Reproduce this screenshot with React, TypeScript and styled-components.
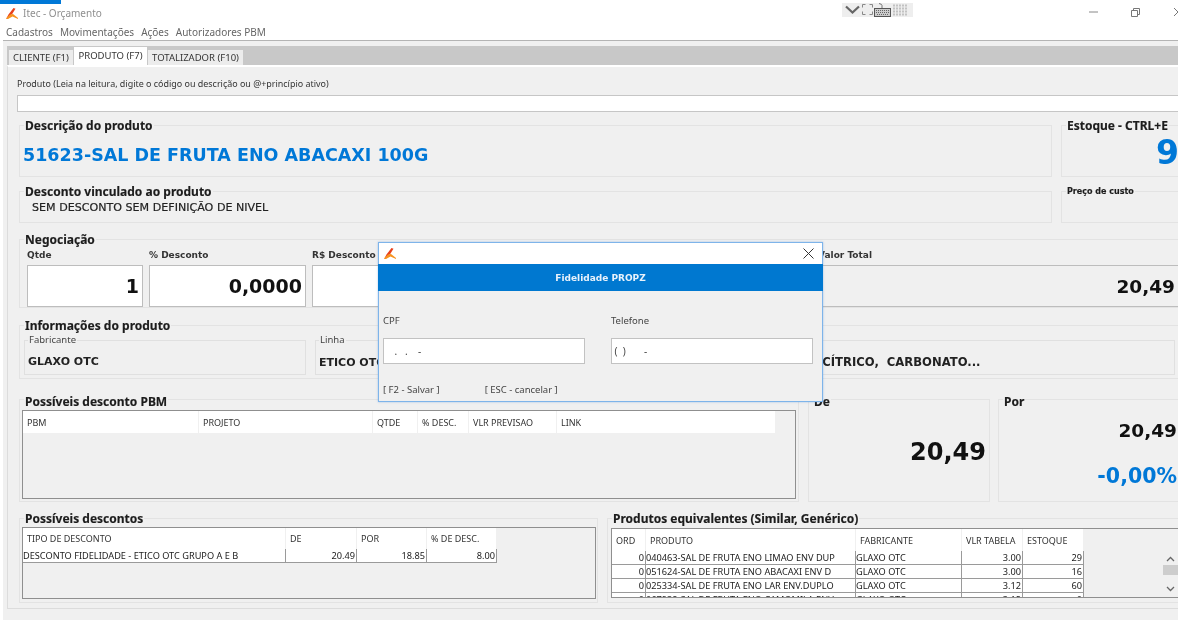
import React from "react";
import styled, { createGlobalStyle } from "styled-components";

const Global = createGlobalStyle`
  html, body { margin: 0; padding: 0; background: #fff; }
  * { box-sizing: border-box; }
`;

const FONT = `"DejaVu Sans", "Noto Sans", sans-serif`;
const TITLE_FONT = `"Noto Sans", "DejaVu Sans", sans-serif`;

const Page = styled.div`
  position: relative;
  width: 1178px;
  height: 626px;
  overflow: hidden;
  background: #fff;
  font-family: "Noto Sans", "DejaVu Sans", sans-serif;
  color: #2b2b2b;
  filter: blur(0.35px);
`;

const AccentStrip = styled.div`
  width: 61px;
  height: 4px;
  background: #0078d7;
`;

const TitleBar = styled.div`
  height: 19px;
  display: flex;
  align-items: center;
  padding-left: 6px;
  font-size: 10px;
  color: #8f8f8f;
  gap: 5px;
  & > span { margin-top: -2px; }
`;

const TrayGroup = styled.div`
  margin-left: 735px;
  height: 14px;
  width: 71px;
  background: #eeeeee;
  display: flex;
  align-items: center;
  gap: 1px;
  margin-top: -8px;
  padding-left: 2px;
`;

const WinButtons = styled.div`
  margin-left: auto;
  display: flex;
  align-items: center;
  gap: 33px;
  margin-top: -3px;
  margin-right: -5px;
`;

const MenuBar = styled.div`
  height: 17px;
  display: flex;
  align-items: center;
  gap: 7px;
  padding-left: 6px;
  font-size: 10px;
  color: #666;
`;

const Body = styled.div`
  height: 580px;
  margin-left: 3px;
  border-top: 1px solid #b4b4b4;
  background: #f0f0f0;
  padding: 5px 0 0 4px;
`;

const TabStrip = styled.div`
  height: 19px;
  background: #c8c8c8;
  display: flex;
  align-items: flex-end;
  padding-left: 2px;
`;

const Tab = styled.div<{ $active?: boolean; $w: number }>`
  width: ${(p) => p.$w}px;
  height: ${(p) => (p.$active ? 20 : 15)}px;
  margin-bottom: ${(p) => (p.$active ? -2 : 0)}px;
  background: ${(p) => (p.$active ? "#ffffff" : "#ececec")};
  font-size: 9.5px;
  color: #333;
  display: flex;
  align-items: center;
  justify-content: center;
  padding-bottom: ${(p) => (p.$active ? 4 : 0)}px;
  margin-right: 1px;
`;

const Content = styled.div`
  height: 544px;
  border-top: 2px solid #ffffff;
  border-left: 1px solid #dcdcdc;
  border-bottom: 1px solid #dcdcdc;
  padding: 11px 0 0 9px;
  background: #f0f0f0;
  width: 1200px;
`;

const SmallLabel = styled.div`
  font-size: 8.95px;
  height: 12px;
  line-height: 12px;
  color: #333;
`;

const ProductInput = styled.div`
  margin-top: 5px;
  height: 17px;
  background: #fff;
  border: 1px solid #c6c6c6;
`;

const Row = styled.div<{ $top: number; $h: number }>`
  display: flex;
  margin-top: ${(p) => p.$top}px;
  margin-left: 2px;
  height: ${(p) => p.$h}px;
`;

const Group = styled.fieldset<{ $w: number; $left?: number }>`
  margin: 0;
  margin-left: ${(p) => p.$left ?? 0}px;
  padding: 0;
  width: ${(p) => p.$w}px;
  flex: none;
  height: 100%;
  min-width: 0;
  border: 1px solid #e3e3e3;
`;

const Legend = styled.legend<{ $small?: boolean; $left?: number; $lh?: number }>`
  margin-left: ${(p) => p.$left ?? 4}px;
  padding: 0 1px;
  height: 14px;
  line-height: ${(p) => p.$lh ?? 16}px;
  font-family: ${(p) => (p.$small ? FONT : TITLE_FONT)};
  font-weight: 700;
  font-size: ${(p) => (p.$small ? 8 : 12)}px;
  color: #1c1c1c;
  -webkit-text-stroke: 0.15px #1c1c1c;
`;

const SubLegend = styled.legend`
  margin-left: 3px;
  padding: 0 1px;
  height: 12px;
  line-height: 12px;
  font-size: 9.5px;
  color: #444;
`;

const BigBlue = styled.div`
  font-family: ${FONT};
  font-weight: 700;
  font-size: 17.5px;
  color: #0078d7;
  padding: 13px 0 0 3px;
  white-space: nowrap;
`;

const StockValue = styled.div`
  width: 117px;
  font-family: ${FONT};
  font-weight: 700;
  font-size: 33px;
  line-height: 34px;
  color: #0078d7;
  text-align: right;
  margin-top: 4px;
`;

const DiscountText = styled.div`
  font-family: ${FONT};
  font-size: 11.1px;
  color: #222;
  padding: 3px 0 0 12px;
  white-space: nowrap;
  -webkit-text-stroke: 0.2px #222;
`;

const FieldRow = styled.div`
  display: flex;
  gap: 6px;
  padding-left: 7px;
  margin-top: 2px;
`;

const Field = styled.div<{ $w: number; $left?: number }>`
  width: ${(p) => p.$w}px;
  flex: none;
  margin-left: ${(p) => p.$left ?? 0}px;
`;

const FieldLabel = styled.div`
  font-family: ${FONT};
  font-weight: 700;
  font-size: 9px;
  height: 17px;
  line-height: 14px;
  color: #333;
  white-space: nowrap;
`;

const ValueBox = styled.div<{ $plain?: boolean }>`
  height: 42px;
  background: ${(p) => (p.$plain ? "#f0f0f0" : "#ffffff")};
  border: 1px solid #bdbdbd;
  font-family: ${FONT};
  font-weight: 700;
  font-size: ${(p) => (p.$plain ? 18.5 : 19)}px;
  color: #111;
  display: flex;
  align-items: center;
  justify-content: flex-end;
  padding-right: 3px;
`;

const SubGroup = styled.fieldset<{ $w: number; $left?: number }>`
  margin: 0 0 0 ${(p) => p.$left ?? 0}px;
  padding: 0 0 0 3px;
  width: ${(p) => p.$w}px;
  flex: none;
  min-width: 0;
  height: 41px;
  border: 1px solid #e0e0e0;

  & > legend { margin-left: 0; }
`;

const SubRow = styled.div`
  display: flex;
  padding-left: 4px;
  margin-top: 2px;
`;

const InfoValue = styled.div`
  font-family: ${FONT};
  font-weight: 700;
  font-size: 11px;
  color: #222;
  margin-top: 9px;
  white-space: nowrap;
`;

const InfoTail = styled.span`
  font-size: 11.6px;
  margin-left: 438px;
`;

const TableFrame = styled.div<{ $h: number; $ml?: number; $w: number; $mt?: number }>`
  width: ${(p) => p.$w}px;
  height: ${(p) => p.$h}px;
  margin-left: ${(p) => p.$ml ?? 2}px;
  margin-top: ${(p) => p.$mt ?? 2}px;
  border: 1px solid #8f8f8f;
  overflow: hidden;
  position: relative;
`;

const HeadRow = styled.div<{ $h: number }>`
  display: flex;
  height: ${(p) => p.$h}px;
`;

const HeadCell = styled.div<{ $w: number }>`
  width: ${(p) => p.$w}px;
  flex: none;
  background: #fff;
  margin-right: 1px;
  font-size: 9px;
  color: #333;
  padding-left: 4px;
  display: flex;
  align-items: center;
  white-space: nowrap;
`;

const DataRow = styled.div<{ $w: number }>`
  display: flex;
  width: ${(p) => p.$w}px;
  height: 14px;
  border-bottom: 1px solid #9a9a9a;
`;

const DataCell = styled.div<{ $w: number; $right?: boolean }>`
  width: ${(p) => p.$w}px;
  flex: none;
  background: #fff;
  border-right: 1px solid #9a9a9a;
  font-size: 9.2px;
  line-height: 13px;
  color: #222;
  white-space: nowrap;
  overflow: hidden;
  text-align: ${(p) => (p.$right ? "right" : "left")};
  padding: 0 1px 0 0;
`;

const Scroller = styled.div`
  position: absolute;
  right: 4px;
  top: 22px;
  bottom: 0;
  width: 15px;
  background: #f0f0f0;
  display: flex;
  flex-direction: column;
  align-items: center;
  padding-top: 5px;
  gap: 3px;
`;

const Thumb = styled.div`
  width: 15px;
  height: 10px;
  background: #cdcdcd;
`;

const DownArrow = styled.svg`
  margin-top: 8px;
`;

const PriceValue = styled.div<{ $size: number; $blue?: boolean; $top: number; $right: number }>`
  font-family: ${FONT};
  font-weight: 700;
  font-size: ${(p) => p.$size}px;
  color: ${(p) => (p.$blue ? "#0078d7" : "#111")};
  text-align: right;
  padding-right: ${(p) => p.$right}px;
  margin-top: ${(p) => p.$top}px;
  line-height: 1.2;
`;

const Modal = styled.div`
  position: absolute;
  left: 378px;
  top: 242px;
  width: 445px;
  height: 160px;
  background: #f0f0f0;
  border: 1px solid #7eb4ea;
  box-shadow: 0 0 2px rgba(90, 150, 220, 0.5);
`;

const ModalTitle = styled.div`
  height: 21px;
  background: #fff;
  display: flex;
  align-items: center;
  justify-content: space-between;
  padding: 0 8px 0 5px;
`;

const ModalBanner = styled.div`
  height: 27px;
  background: #0078d0;
  color: #e8f2fb;
  font-family: ${FONT};
  font-weight: 700;
  font-size: 9px;
  display: flex;
  align-items: center;
  justify-content: center;
  margin-left: -1px;
  margin-right: -1px;
`;

const ModalForm = styled.div`
  display: grid;
  grid-template-columns: 202px 202px;
  column-gap: 26px;
  padding: 24px 0 0 4px;
`;

const ModalLabel = styled.div`
  font-size: 9.5px;
  height: 12px;
  line-height: 12px;
  color: #444;
  margin-bottom: 11px;
`;

const MaskInput = styled.div`
  height: 26px;
  background: #fff;
  border: 1px solid #c2c2c2;
  font-size: 10px;
  color: #444;
  display: flex;
  align-items: center;
  white-space: pre;
`;

const ModalFooter = styled.div`
  display: flex;
  gap: 45px;
  padding: 19px 0 0 4px;
  font-size: 9.5px;
  color: #444;
`;

const Logo = () => (
  <svg width="12" height="11" viewBox="0 0 12 11">
    <path d="M0 11 L2.5 6.5 L7.5 0 L9.5 0.8 L6.5 5.5 L4.5 7.5 Z" fill="#e8401c" />
    <path d="M1 9.5 L4 6.5 L7 6 L12 10 L12 11 L6.5 8.6 L2 11 L0 11 Z" fill="#f7931e" />
  </svg>
);

const TrayIcons = () => (
  <>
    <svg width="17" height="10" viewBox="0 0 17 10">
      <path d="M2 1.5 L8.5 7.5 L15 1.5" fill="none" stroke="#666" strokeWidth="2.2" />
    </svg>
    <svg width="11" height="11" viewBox="0 0 11 11" fill="none" stroke="#888" strokeWidth="1">
      <path d="M0.5 3.5V0.5H3.5M7.5 0.5H10.5V3.5M0.5 7.5V10.5H3.5M10.5 7.5V10.5H7.5" />
    </svg>
    <svg width="17" height="14" viewBox="0 0 17 14">
      <path d="M8 5 V2.5 Q8 1 5 0.5" fill="none" stroke="#555" strokeWidth="0.8" />
      <rect x="0.5" y="5.5" width="16" height="8" fill="#ccc" stroke="#555" />
      <path d="M2 7.5H15M2 9.5H15M3 11.5H14" stroke="#666" strokeDasharray="1 1" />
    </svg>
    <svg width="16" height="12" viewBox="0 0 16 12">
      <path d="M1 1.5H15M1 4.5H15M1 7.5H15M1 10.5H15" stroke="#c2c2c2" strokeWidth="2" strokeDasharray="2 1" />
    </svg>
  </>
);

const pbmCols: [string, number][] = [
  ["PBM", 175], ["PROJETO", 173], ["QTDE", 44], ["% DESC.", 50],
  ["VLR PREVISAO", 87], ["LINK", 218],
];
const descCols: [string, number][] = [
  ["TIPO DE DESCONTO", 262], ["DE", 70], ["POR", 69], ["% DE DESC.", 69],
];
const eqCols: [string, number][] = [
  ["ORD", 33], ["PRODUTO", 209], ["FABRICANTE", 105], ["VLR TABELA", 60], ["ESTOQUE", 60],
];
const eqRows = [
  ["0", "040463-SAL DE FRUTA ENO LIMAO ENV DUP", "GLAXO OTC", "3.00", "29"],
  ["0", "051624-SAL DE FRUTA ENO ABACAXI ENV D", "GLAXO OTC", "3.00", "16"],
  ["0", "025334-SAL DE FRUTA ENO LAR ENV.DUPLO", "GLAXO OTC", "3.12", "60"],
  ["0", "067938-SAL DE FRUTA ENO CAMOMILA ENV", "GLAXO OTC", "3.12", "0"],
];

export default function App() {
  return (
    <Page>
      <Global />
      <AccentStrip />
      <TitleBar>
        <Logo />
        <span>Itec - Orçamento</span>
        <TrayGroup>
          <TrayIcons />
        </TrayGroup>
        <WinButtons>
          <svg width="9" height="10" viewBox="0 0 9 10"><path d="M0 5H9" stroke="#888" /></svg>
          <svg width="9" height="9" viewBox="0 0 9 9" fill="none" stroke="#777">
            <path d="M0.5 2.5H6.5V8.5H0.5Z M2.5 2.5V0.5H8.5V6.5H6.5" />
          </svg>
          <svg width="10" height="10" viewBox="0 0 10 10"><path d="M1 1L9 9M9 1L1 9" stroke="#777" /></svg>
        </WinButtons>
      </TitleBar>
      <MenuBar>
        <span>Cadastros</span><span>Movimentações</span><span>Ações</span><span>Autorizadores PBM</span>
      </MenuBar>
      <Body>
        <TabStrip>
          <Tab $w={64}>CLIENTE (F1)</Tab>
          <Tab $w={73} $active>PRODUTO (F7)</Tab>
          <Tab $w={95}>TOTALIZADOR (F10)</Tab>
        </TabStrip>
        <Content>
          <SmallLabel>Produto (Leia na leitura, digite o código ou descrição ou @+princípio ativo)</SmallLabel>
          <ProductInput />
          <Row $top={6} $h={59}>
            <Group $w={1033}>
              <Legend>Descrição do produto</Legend>
              <BigBlue>51623-SAL DE FRUTA ENO ABACAXI 100G</BigBlue>
            </Group>
            <Group $w={120} $left={9}>
              <Legend>Estoque - CTRL+E</Legend>
              <StockValue>9</StockValue>
            </Group>
          </Row>
          <Row $top={7} $h={39}>
            <Group $w={1033}>
              <Legend>Desconto vinculado ao produto</Legend>
              <DiscountText>SEM DESCONTO SEM DEFINIÇÃO DE NIVEL</DiscountText>
            </Group>
            <Group $w={120} $left={9}>
              <Legend $small>Preço de custo</Legend>
            </Group>
          </Row>
          <Row $top={9} $h={76}>
            <Group $w={1170}>
              <Legend>Negociação</Legend>
              <FieldRow>
                <Field $w={116}>
                  <FieldLabel>Qtde</FieldLabel>
                  <ValueBox>1</ValueBox>
                </Field>
                <Field $w={157}>
                  <FieldLabel>% Desconto</FieldLabel>
                  <ValueBox>0,0000</ValueBox>
                </Field>
                <Field $w={200}>
                  <FieldLabel>R$ Desconto Item</FieldLabel>
                  <ValueBox />
                </Field>
                <Field $w={361} $left={300}>
                  <FieldLabel>Valor Total</FieldLabel>
                  <ValueBox $plain>20,49</ValueBox>
                </Field>
              </FieldRow>
            </Group>
          </Row>
          <Row $top={10} $h={61}>
            <Group $w={1170}>
              <Legend>Informações do produto</Legend>
              <SubRow>
                <SubGroup $w={282}>
                  <SubLegend>Fabricante</SubLegend>
                  <InfoValue>GLAXO OTC</InfoValue>
                </SubGroup>
                <SubGroup $w={860} $left={9}>
                  <SubLegend>Linha</SubLegend>
                  <InfoValue>
                    ETICO OTC
                    <InfoTail>CÍTRICO,&nbsp; CARBONATO...</InfoTail>
                  </InfoValue>
                </SubGroup>
              </SubRow>
            </Group>
          </Row>
          <Row $top={13} $h={110}>
            <Group $w={780}>
              <Legend $lh={19}>Possíveis desconto PBM</Legend>
              <TableFrame $w={774} $h={89} $mt={4}>
                <HeadRow $h={22}>
                  {pbmCols.map(([t, w]) => <HeadCell key={t} $w={w}>{t}</HeadCell>)}
                </HeadRow>
              </TableFrame>
            </Group>
            <Group $w={182} $left={9}>
              <Legend $lh={19}>De</Legend>
              <PriceValue $size={24} $top={32} $right={3}>20,49</PriceValue>
            </Group>
            <Group $w={190} $left={8}>
              <Legend $lh={19}>Por</Legend>
              <PriceValue $size={18.5} $top={14} $right={10}>20,49</PriceValue>
              <PriceValue $size={20.5} $top={22} $right={10} $blue>-0,00%</PriceValue>
            </Group>
          </Row>
          <Row $top={9} $h={92}>
            <Group $w={579}>
              <Legend>Possíveis descontos</Legend>
              <TableFrame $w={574} $h={72}>
                <HeadRow $h={21}>
                  {descCols.map(([t, w]) => <HeadCell key={t} $w={w}>{t}</HeadCell>)}
                </HeadRow>
                <DataRow $w={474}>
                  <DataCell $w={263}>DESCONTO FIDELIDADE - ETICO OTC GRUPO A E B</DataCell>
                  <DataCell $w={71} $right>20.49</DataCell>
                  <DataCell $w={70} $right>18.85</DataCell>
                  <DataCell $w={70} $right>8.00</DataCell>
                </DataRow>
              </TableFrame>
            </Group>
            <Group $w={580} $left={9}>
              <Legend>Produtos equivalentes (Similar, Genérico)</Legend>
              <TableFrame $w={572} $h={70} $ml={3} $mt={3}>
                <HeadRow $h={22}>
                  {eqCols.map(([t, w]) => <HeadCell key={t} $w={w}>{t}</HeadCell>)}
                </HeadRow>
                {eqRows.map((r) => (
                  <DataRow key={r[1]} $w={472}>
                    <DataCell $w={34} $right>{r[0]}</DataCell>
                    <DataCell $w={210}>{r[1]}</DataCell>
                    <DataCell $w={106}>{r[2]}</DataCell>
                    <DataCell $w={61} $right>{r[3]}</DataCell>
                    <DataCell $w={61} $right>{r[4]}</DataCell>
                  </DataRow>
                ))}
                <Scroller>
                  <svg width="9" height="6" viewBox="0 0 9 6"><path d="M1 5L4.5 1.5L8 5" fill="none" stroke="#666" strokeWidth="1.3" /></svg>
                  <Thumb />
                  <DownArrow width="9" height="6" viewBox="0 0 9 6"><path d="M1 1L4.5 4.5L8 1" fill="none" stroke="#666" strokeWidth="1.3" /></DownArrow>
                </Scroller>
              </TableFrame>
            </Group>
          </Row>
        </Content>
      </Body>
      <Modal>
        <ModalTitle>
          <Logo />
          <svg width="11" height="11" viewBox="0 0 11 11"><path d="M0.5 0.5L10.5 10.5M10.5 0.5L0.5 10.5" stroke="#333" /></svg>
        </ModalTitle>
        <ModalBanner>Fidelidade PROPZ</ModalBanner>
        <ModalForm>
          <div>
            <ModalLabel>CPF</ModalLabel>
            <MaskInput>{"    .   .    -"}</MaskInput>
          </div>
          <div>
            <ModalLabel>Telefone</ModalLabel>
            <MaskInput>{" (  )       -"}</MaskInput>
          </div>
        </ModalForm>
        <ModalFooter>
          <span>[ F2 - Salvar ]</span>
          <span>[ ESC - cancelar ]</span>
        </ModalFooter>
      </Modal>
    </Page>
  );
}
